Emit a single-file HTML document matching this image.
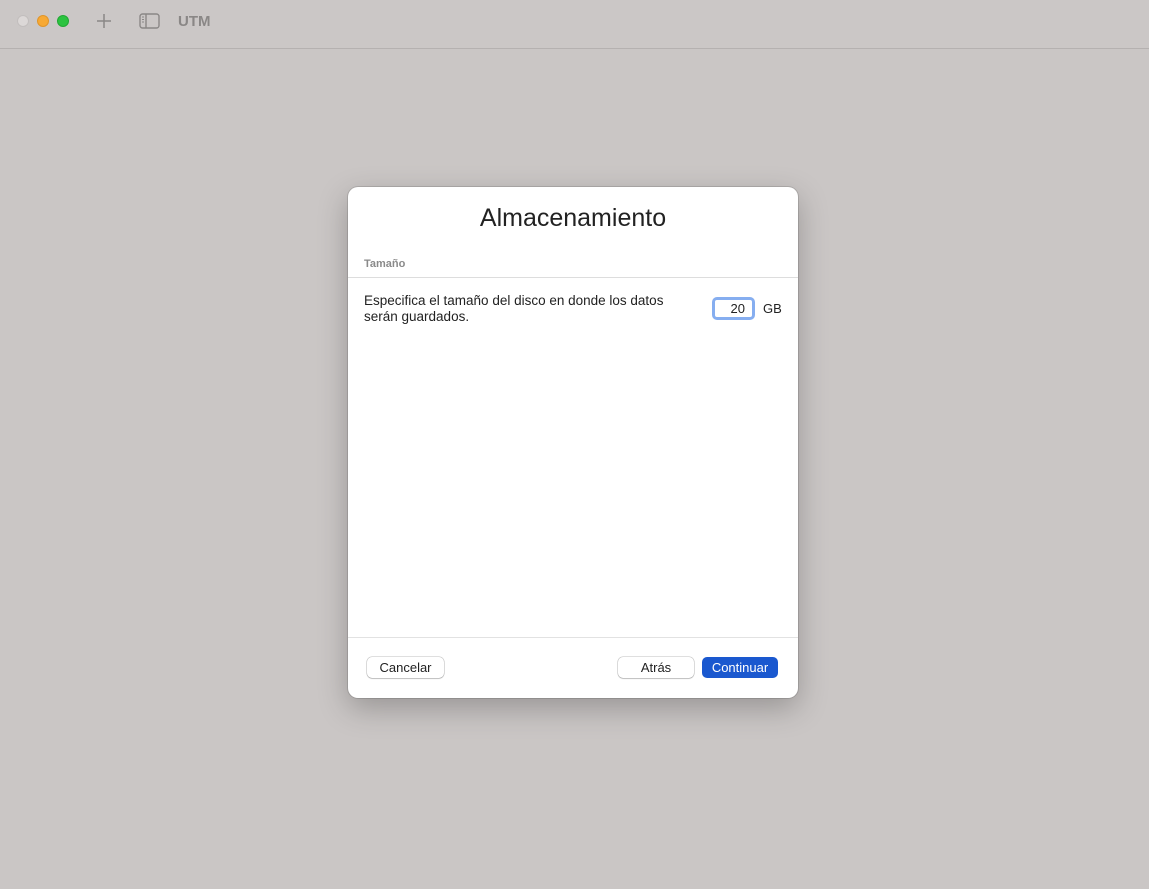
<!DOCTYPE html>
<html><head><meta charset="utf-8"><style>
*{box-sizing:border-box;margin:0;padding:0}
body{width:1149px;height:889px;background:#cac6c5;font-family:"Liberation Sans",sans-serif;position:relative;overflow:hidden}
.tb{position:absolute;left:0;top:0;width:1149px;height:49px;border-bottom:1px solid #b5b1b0;background:#cbc7c6}
.dot{position:absolute;top:15px;width:12px;height:12px;border-radius:50%}
.t{position:absolute;color:#8a8786}
.dlg{position:absolute;left:348px;top:187px;width:450px;height:511px;background:#fff;border-radius:10px;box-shadow:0 10px 30px rgba(0,0,0,.25),0 0 0 1px rgba(0,0,0,.12)}
.btn{position:absolute;top:470px;height:21px;border-radius:5px;font-size:13px;text-align:center;line-height:21px;color:#222;background:#fff;box-shadow:0 0 0 .5px rgba(0,0,0,.25),0 1px 1px rgba(0,0,0,.15)}
</style></head><body>
<div class="tb">
<div class="dot" style="left:17px;background:#dcd8d7;border:1px solid #c2bebd"></div>
<div class="dot" style="left:37px;background:#f7a934;border:1px solid #e0952a"></div>
<div class="dot" style="left:57px;background:#2cc340;border:1px solid #22a834"></div>
<svg class="t" style="left:96px;top:13px" width="16" height="16"><path d="M8 1v14M1 8h14" stroke="#8a8786" stroke-width="1.5"/></svg>
<svg class="t" style="left:139px;top:13px" width="21" height="16"><rect x="1" y="1" width="19" height="14" rx="2.5" fill="none" stroke="#8a8786" stroke-width="1.4"/><path d="M7 1v14" stroke="#8a8786" stroke-width="1.4"/><path d="M3 4h2M3 6.5h2M3 9h2" stroke="#8a8786"/></svg>
<div class="t" style="left:178px;top:13px;font-size:15px;font-weight:bold">UTM</div>
</div>
<div class="dlg">
<div style="position:absolute;top:17px;width:100%;text-align:center;font-size:25px;color:#222">Almacenamiento</div>
<div style="position:absolute;left:16px;top:71px;font-size:11px;font-weight:bold;color:#8a8a8a">Tamaño</div>
<div style="position:absolute;left:0;top:90px;width:100%;border-top:1px solid #ddd"></div>
<div style="position:absolute;left:16px;top:106px;font-size:13.5px;line-height:16px;color:#222;width:320px">Especifica el tamaño del disco en donde los datos serán guardados.</div>
<div style="position:absolute;left:364px;top:110px;width:43px;height:23px;border:3px solid #86aef0;border-radius:5px;font-size:13px;text-align:right;padding-right:7px;line-height:17px;color:#222">20</div>
<div style="position:absolute;left:415px;top:114px;font-size:13px;color:#222">GB</div>
<div style="position:absolute;left:0;top:450px;width:100%;border-top:1px solid #e2e2e2"></div>
<div class="btn" style="left:19px;width:77px">Cancelar</div>
<div class="btn" style="left:270px;width:76px">Atrás</div>
<div class="btn" style="left:354px;width:76px;background:#1a58cf;color:#fff;box-shadow:none">Continuar</div>
</div>
</body></html>
